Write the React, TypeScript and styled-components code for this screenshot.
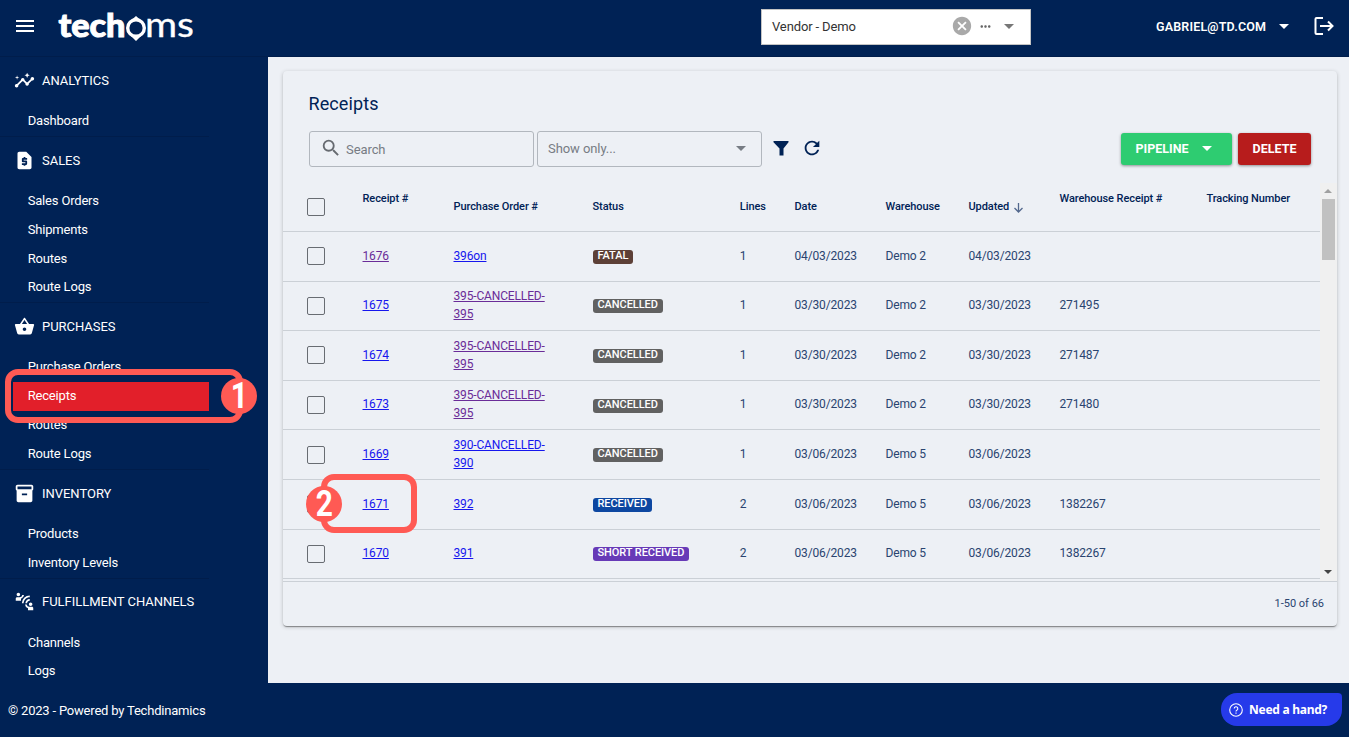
import React from 'react';
import styled, { createGlobalStyle } from 'styled-components';
import {
  MdInsights,
  MdRequestPage,
  MdShoppingBasket,
  MdInventory2,
  MdConnectWithoutContact,
  MdSearch,
  MdRefresh,
  MdCancel,
  MdMoreHoriz,
} from 'react-icons/md';

const navy = '#002255';
const surface = '#edf0f5';
const line = '#cbd0d6';
const coral = '#ff5a54';

const GlobalStyle = createGlobalStyle`
  * { box-sizing: border-box; }
  body { margin: 0; background: ${surface}; overflow: hidden; }
`;

const Page = styled.div`
  position: relative;
  display: flex;
  flex-direction: column;
  width: 1349px;
  height: 737px;
  overflow: hidden;
  background: ${surface};
  color: ${navy};
  font-family: Roboto, 'Liberation Sans', sans-serif;
  font-size: 12px;
`;

const TopBar = styled.header`
  display: flex;
  align-items: center;
  height: 57px;
  flex: none;
  padding: 0 14px 0 16px;
  background: ${navy};
  border-bottom: 1px solid #001d4b;
  color: #fff;
`;

const MenuButton = styled.button`
  display: flex;
  flex-direction: column;
  gap: 3px;
  width: 18px;
  padding: 0;
  margin: 0 23px 4px 0;
  border: 0;
  background: none;
  span { height: 2px; background: #fff; }
`;

const Logo = styled.svg`
  width: 144px;
  height: 56px;
  flex: none;
  margin-right: 560px;
  fill: #fff;
  font-family: Lato, sans-serif;
`;

const VendorSelect = styled.div`
  display: flex;
  align-items: center;
  width: 270px;
  height: 36px;
  margin: -2px 125px 0 0;
  padding: 0 16px 2px 10px;
  background: #fff;
  border: 1px solid #c4c4c4;
  color: #333;
  font-size: 13px;
  letter-spacing: -0.13px;
  span { flex: 1; }
`;

const ClearIcon = styled(MdCancel)`
  width: 22px;
  height: 22px;
  margin-right: 5px;
  color: #a9a9a9;
`;

const DotsIcon = styled(MdMoreHoriz)`
  width: 15px;
  height: 15px;
  margin-right: 11px;
  color: #666;
`;

const Caret = styled.i<{ $color?: string; $size?: number }>`
  border: ${p => p.$size ?? 5}px solid transparent;
  border-top-color: ${p => p.$color ?? '#fff'};
  border-bottom: 0;
`;

const UserMenu = styled.div`
  display: flex;
  align-items: center;
  gap: 13px;
  margin: -3px 25px 0 0;
  font-size: 12.5px;
  font-weight: 600;
  letter-spacing: 0.17px;
  white-space: nowrap;
`;

const LogoutIcon = styled.svg`
  width: 20px;
  height: 18px;
  margin-top: -4px;
  flex: none;
  fill: none;
  stroke: #fff;
  stroke-width: 2;
`;

const Body = styled.div`
  display: flex;
  height: 626px;
  flex: none;
`;

const Sidebar = styled.nav`
  width: 268px;
  flex: none;
  overflow: hidden;
  background: ${navy};
  color: #fff;
  font-size: 13px;
`;

const NavSection = styled.section`
  width: 209px;
  padding-bottom: 0.2px;
  border-bottom: 1px solid #001d4b;
`;

const NavHeading = styled.div`
  display: flex;
  align-items: center;
  height: 48px;
  margin-bottom: 2px;
  padding: 0 0 1.3px 14px;
  gap: 7px;
  letter-spacing: -0.03px;
  white-space: nowrap;
  svg { width: 21px; height: 21px; flex: none; }
`;

const NavItem = styled.a<{ $active?: boolean }>`
  display: flex;
  align-items: center;
  height: 28.8px;
  margin-left: 13px;
  padding: 0 0 1.6px 14.7px;
  background: ${p => (p.$active ? '#e21f2a' : 'transparent')};
  letter-spacing: -0.18px;
`;

const Main = styled.main`
  flex: 1;
  padding: 14px 12px 57px 15px;
`;

const Card = styled.section`
  display: flex;
  flex-direction: column;
  width: 1054px;
  height: 555px;
  border-radius: 4px;
  background: ${surface};
  box-shadow: 0 2px 1px -1px rgba(0, 0, 0, 0.25), 0 1px 1px rgba(0, 0, 0, 0.16), 0 1px 4px rgba(0, 0, 0, 0.2);
`;

const Title = styled.h1`
  margin: 22px 0 17px 25.5px;
  height: 21px;
  line-height: 21px;
  font-size: 18px;
  font-weight: 400;
  letter-spacing: 0.1px;
`;

const Toolbar = styled.div`
  display: flex;
  align-items: center;
  height: 36px;
  margin: 0 26px;
`;

const Field = styled.div<{ $lift?: boolean }>`
  display: flex;
  align-items: center;
  width: 225px;
  height: 36px;
  margin-right: 3px;
  padding: 0 15px ${p => (p.$lift ? 2 : 0)}px 10px;
  border: 1px solid #b2b7be;
  border-radius: 3px;
  color: #777c84;
  font-size: 13px;
  letter-spacing: -0.08px;
  span { flex: 1; }
`;

const SearchGlyph = styled(MdSearch)`
  width: 22px;
  height: 22px;
  margin: -3px 4px 0 0;
  color: #666a70;
`;

const FilterIcon = styled.svg`
  width: 16px;
  height: 16px;
  margin: -3px 12px 0 8px;
  fill: ${navy};
`;

const RefreshIcon = styled(MdRefresh)`
  width: 22px;
  height: 22px;
  margin: -2px auto 0 -0.5px;
`;

const ActionButton = styled.button<{ $bg: string; $width: number }>`
  display: flex;
  align-items: center;
  justify-content: center;
  gap: 13px;
  width: ${p => p.$width}px;
  height: 32px;
  margin-left: 6px;
  padding: 0 6px 1px 0;
  border: 0;
  border-radius: 3px;
  background: ${p => p.$bg};
  box-shadow: 0 1px 3px rgba(0, 0, 0, 0.4);
  color: #fff;
  font: 700 12.5px Roboto, sans-serif;
  &:last-child { padding-right: 0; }
`;

const TableArea = styled.div`
  display: flex;
  height: 398px;
  margin-top: 16px;
`;

const Table = styled.div`
  width: 1037px;
  overflow: hidden;
`;

const Row = styled.div<{ $head?: boolean }>`
  display: grid;
  grid-template-columns: 55.5px 91px 139px 147.3px 54.7px 91px 83px 91px 147px 1fr;
  align-items: center;
  height: ${p => (p.$head ? 49 : 49.6)}px;
  padding-left: 24px;
  border-bottom: 1px solid ${line};
  font-size: ${p => (p.$head ? 11 : 12)}px;
  font-weight: ${p => (p.$head ? 500 : 400)};
  letter-spacing: ${p => (p.$head ? -0.08 : -0.15)}px;
  line-height: 18px;
  white-space: nowrap;
`;

const HeadCell = styled.div<{ $raised?: boolean }>`
  display: flex;
  align-items: center;
  gap: 4px;
  padding-bottom: ${p => (p.$raised ? 16 : 0)}px;
  svg { width: 11px; height: 11px; fill: none; stroke: #53688d; stroke-width: 1.3; margin-top: 1px; }
`;

const Cell = styled.div`
  color: #2a4470;
  padding-bottom: 1.2px;
`;

const Checkbox = styled.div`
  width: 18px;
  height: 18px;
  border: 1px solid #686c72;
  border-radius: 2px;
`;

const RowLink = styled.a<{ $visited?: boolean }>`
  display: inline-block;
  color: ${p => (p.$visited ? '#6a2c98' : '#1616ee')};
  text-decoration: underline;
  text-underline-offset: 1px;
`;

const Badge = styled.span<{ $bg: string }>`
  display: block;
  width: max-content;
  height: 14px;
  margin-top: 2.4px;
  padding: 0 5px;
  border-radius: 3px;
  background: ${p => p.$bg};
  color: #fff;
  font-size: 11px;
  font-weight: 500;
  letter-spacing: -0.08px;
  line-height: 12.6px;
`;

const ScrollTrack = styled.div`
  display: flex;
  flex-direction: column;
  align-items: center;
  width: 17px;
  padding: 6px 2px 7px 0;
  background: #f0f0f0;
`;

const ScrollArrow = styled.i<{ $up?: boolean }>`
  border: 4px solid transparent;
  border-top: ${p => (p.$up ? '0' : '4px solid #444')};
  border-bottom: ${p => (p.$up ? '4px solid #a0a0a0' : '0')};
  margin-top: ${p => (p.$up ? '0' : 'auto')};
`;

const ScrollThumb = styled.div`
  width: 13px;
  height: 61px;
  margin-top: 6px;
  margin-left: 2px;
  background: #c1c1c1;
`;

const TableFooter = styled.div`
  display: flex;
  flex: 1;
  align-items: center;
  justify-content: flex-end;
  padding: 0 13px 2px 0;
  border-top: 1px solid ${line};
  color: #2a4470;
  font-size: 11px;
`;

const BottomBar = styled.footer`
  display: flex;
  align-items: center;
  justify-content: space-between;
  height: 54px;
  padding: 0 7px 0 8px;
  background: ${navy};
  color: #fff;
  font-size: 13px;
  letter-spacing: -0.2px;
`;

const HelpButton = styled.button`
  display: flex;
  align-items: center;
  gap: 6px;
  width: 121px;
  height: 33px;
  margin-bottom: 1px;
  padding: 0 0 0 8px;
  border: 0;
  border-radius: 16px 4px 16px 16px;
  background: #263aea;
  color: #fff;
  font: 700 12px 'Noto Sans', sans-serif;
  letter-spacing: -0.27px;
  white-space: nowrap;
  svg { width: 14px; height: 14px; flex: none; }
`;

const Callout = styled.div<{ $x: number; $y: number; $w: number; $h: number }>`
  position: absolute;
  left: ${p => p.$x}px;
  top: ${p => p.$y}px;
  width: ${p => p.$w}px;
  height: ${p => p.$h}px;
  border: 6px solid ${coral};
  border-radius: 13px;
`;

const CalloutNumber = styled.div<{ $x: number; $y: number }>`
  position: absolute;
  left: ${p => p.$x}px;
  top: ${p => p.$y}px;
  display: flex;
  align-items: center;
  justify-content: center;
  width: 36px;
  height: 36px;
  padding-bottom: 1px;
  border-radius: 50%;
  background: ${coral};
  color: #fff;
  font: 700 36px Roboto, sans-serif;
  line-height: 36px;
  span { transform: scaleX(0.83); }
`;

const sections = [
  { title: 'ANALYTICS', icon: MdInsights, items: ['Dashboard'] },
  { title: 'SALES', icon: MdRequestPage, items: ['Sales Orders', 'Shipments', 'Routes', 'Route Logs'] },
  { title: 'PURCHASES', icon: MdShoppingBasket, items: ['Purchase Orders', 'Receipts', 'Routes', 'Route Logs'] },
  { title: 'INVENTORY', icon: MdInventory2, items: ['Products', 'Inventory Levels'] },
  { title: 'FULFILLMENT CHANNELS', icon: MdConnectWithoutContact, items: ['Channels', 'Logs'] },
];

const statusColors: Record<string, string> = {
  FATAL: '#5d4037',
  CANCELLED: '#616161',
  RECEIVED: '#0d47a1',
  'SHORT RECEIVED': '#673ab7',
};

interface Receipt {
  id: string;
  po: string[];
  status: string;
  lines: number;
  date: string;
  warehouse: string;
  whReceipt: string;
  idVisited?: boolean;
  poVisited?: boolean;
}

const receipts: Receipt[] = [
  { id: '1676', po: ['396on'], status: 'FATAL', lines: 1, date: '04/03/2023', warehouse: 'Demo 2', whReceipt: '', idVisited: true },
  { id: '1675', po: ['395-CANCELLED-', '395'], status: 'CANCELLED', lines: 1, date: '03/30/2023', warehouse: 'Demo 2', whReceipt: '271495', poVisited: true },
  { id: '1674', po: ['395-CANCELLED-', '395'], status: 'CANCELLED', lines: 1, date: '03/30/2023', warehouse: 'Demo 2', whReceipt: '271487', poVisited: true },
  { id: '1673', po: ['395-CANCELLED-', '395'], status: 'CANCELLED', lines: 1, date: '03/30/2023', warehouse: 'Demo 2', whReceipt: '271480', poVisited: true },
  { id: '1669', po: ['390-CANCELLED-', '390'], status: 'CANCELLED', lines: 1, date: '03/06/2023', warehouse: 'Demo 5', whReceipt: '' },
  { id: '1671', po: ['392'], status: 'RECEIVED', lines: 2, date: '03/06/2023', warehouse: 'Demo 5', whReceipt: '1382267' },
  { id: '1670', po: ['391'], status: 'SHORT RECEIVED', lines: 2, date: '03/06/2023', warehouse: 'Demo 5', whReceipt: '1382267' },
];

export default function App() {
  return (
    <Page>
      <GlobalStyle />
      <TopBar>
        <MenuButton aria-label="Menu"><span /><span /><span /></MenuButton>
        <Logo viewBox="0 0 144 56">
          <text x="1.500" y="37" fontSize="33" fontWeight="900" stroke="#fff" strokeWidth="1" textLength="67" lengthAdjust="spacingAndGlyphs">tech</text>
          <circle cx="79" cy="28" r="8.3" fill="none" stroke="#fff" strokeWidth="3.4" />
          <path d="M74 20.500l5-4.500 5 4.500zM74 36l5 5 5-5z" />
          <text x="88" y="37.300" fontSize="34" stroke="#fff" strokeWidth="0.3" textLength="49" lengthAdjust="spacingAndGlyphs">ms</text>
        </Logo>
        <VendorSelect>
          <span>Vendor - Demo</span>
          <ClearIcon />
          <DotsIcon />
          <Caret $color="#777" />
        </VendorSelect>
        <UserMenu>GABRIEL@TD.COM<Caret /></UserMenu>
        <LogoutIcon viewBox="0 0 20 18">
          <path d="M9 1H2.5Q1.5 1 1.5 2v14q0 1 1 1H9M6 9h12M14 4.5L18.5 9 14 13.5" />
        </LogoutIcon>
      </TopBar>
      <Body>
        <Sidebar>
          {sections.map(({ title, icon: Icon, items }) => (
            <NavSection key={title}>
              <NavHeading><Icon />{title}</NavHeading>
              {items.map(item => (
                <NavItem key={item} $active={item === 'Receipts'}>{item}</NavItem>
              ))}
            </NavSection>
          ))}
        </Sidebar>
        <Main>
          <Card>
            <Title>Receipts</Title>
            <Toolbar>
              <Field><SearchGlyph /><span>Search</span></Field>
              <Field $lift><span>Show only...</span><Caret $color="#777c84" /></Field>
              <FilterIcon viewBox="0 0 16 16"><path d="M0.500 1h15v1.200L10.500 8.500V15.500h-4V8.500L0.500 2.200z" /></FilterIcon>
              <RefreshIcon />
              <ActionButton $bg="#2ecc71" $width={111}>PIPELINE<Caret /></ActionButton>
              <ActionButton $bg="#b71c1c" $width={73}>DELETE</ActionButton>
            </Toolbar>
            <TableArea>
              <Table>
                <Row $head>
                  <Checkbox />
                  <HeadCell $raised>Receipt #</HeadCell>
                  <HeadCell>Purchase Order #</HeadCell>
                  <HeadCell>Status</HeadCell>
                  <HeadCell>Lines</HeadCell>
                  <HeadCell>Date</HeadCell>
                  <HeadCell>Warehouse</HeadCell>
                  <HeadCell>
                    Updated
                    <svg viewBox="0 0 11 11"><path d="M5.500 1v9M1.500 6l4 4 4-4" /></svg>
                  </HeadCell>
                  <HeadCell $raised>Warehouse Receipt #</HeadCell>
                  <HeadCell $raised>Tracking Number</HeadCell>
                </Row>
                {receipts.map(r => (
                  <Row key={r.id}>
                    <Checkbox />
                    <Cell><RowLink $visited={r.idVisited}>{r.id}</RowLink></Cell>
                    <Cell>
                      <RowLink $visited={r.poVisited}>
                        {r.po.map((part, i) => (
                          <React.Fragment key={part}>{i > 0 && <br />}{part}</React.Fragment>
                        ))}
                      </RowLink>
                    </Cell>
                    <Cell><Badge $bg={statusColors[r.status]}>{r.status}</Badge></Cell>
                    <Cell>{r.lines}</Cell>
                    <Cell>{r.date}</Cell>
                    <Cell>{r.warehouse}</Cell>
                    <Cell>{r.date}</Cell>
                    <Cell>{r.whReceipt}</Cell>
                  </Row>
                ))}
              </Table>
              <ScrollTrack>
                <ScrollArrow $up />
                <ScrollThumb />
                <ScrollArrow />
              </ScrollTrack>
            </TableArea>
            <TableFooter>1-50 of 66</TableFooter>
          </Card>
        </Main>
      </Body>
      <BottomBar>
        <span>© 2023 - Powered by Techdinamics</span>
        <HelpButton>
          <svg viewBox="0 0 14 14" fill="none" stroke="#fff" strokeWidth="1.1">
            <circle cx="7" cy="7" r="6.3" />
            <path d="M5.200 5.600a1.800 1.800 0 1 1 2.600 1.600q-.8.4-.8 1.200M7 9.600v1.100" />
          </svg>
          Need a hand?
        </HelpButton>
      </BottomBar>
      <Callout $x={5} $y={369} $w={238} $h={54} />
      <CalloutNumber $x={221} $y={378}><span>1</span></CalloutNumber>
      <Callout $x={321} $y={474} $w={96} $h={59} />
      <CalloutNumber $x={306} $y={486}><span>2</span></CalloutNumber>
    </Page>
  );
}
